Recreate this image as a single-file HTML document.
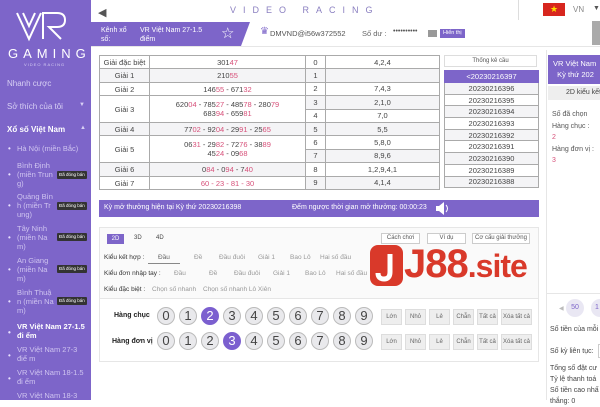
<!DOCTYPE html>
<html><head><meta charset="utf-8"><style>
*{margin:0;padding:0;box-sizing:border-box}
body{width:600px;height:400px;overflow:hidden;background:#fff;font-family:"Liberation Sans","DejaVu Sans",sans-serif;position:relative;color:#333}
.a{position:absolute;white-space:nowrap}
#sb{position:absolute;left:0;top:0;width:91px;height:400px;background:#7d65c9;color:#fff;overflow:hidden}
.si{position:absolute;left:17px;font-size:7.5px;color:#cfc4f0;line-height:9px;white-space:normal;width:40px}
.dot{position:absolute;left:-9px;color:#e8e0ff;font-size:8px}
.tag{position:absolute;left:40px;background:#333;color:#fff;font-size:4.5px;padding:1px 2px;border-radius:1px;white-space:nowrap;line-height:6px}
table{border-collapse:collapse;position:absolute;font-size:7.5px;color:#444;table-layout:fixed}
td{border:1px solid #aaa;text-align:center;padding:0;white-space:nowrap;overflow:hidden}
.g1{position:absolute;left:99px;top:55px;width:206px;display:grid;grid-template-columns:50px 156px;grid-template-rows:13px 14px 13px 27px 13px 27px 14px 13px;border-top:1px solid #aaa;border-left:1px solid #aaa;font-size:7.5px;color:#444}
.g1>div{border-right:1px solid #aaa;border-bottom:1px solid #aaa;display:flex;align-items:center;justify-content:center}
.g1>div>p{text-align:center;line-height:9px;white-space:nowrap}
.g1 .s{background:#f4f4f6}
.r{color:#d7517a}
.gr td{background:#f4f4f6}
.circ{position:absolute;width:18px;height:18px;border-radius:50%;background:#e9e9ec;border:1px solid #bbb;text-align:center;line-height:16px;font-size:13px;color:#444}
.circ.on{background:#7b5fcf;color:#fff;border-color:#7b5fcf}
.btn{position:absolute;height:16px;background:#eee;border:1px solid #ddd;font-size:6px;color:#666;text-align:center;line-height:14px;white-space:nowrap;overflow:hidden}
.tb{position:absolute;height:11px;border:1px solid #ccc;font-size:6px;color:#555;text-align:center;line-height:9px;background:#fff;white-space:nowrap;overflow:hidden}
.opt{font-size:6.5px;color:#999}
</style></head><body>
<div id="sb">
 <svg class="a" style="left:15px;top:10px" width="54" height="32" viewBox="0 0 54 32"><path d="M2 3 L14 29 L26 3 M8 3 L14 16 L20 3" fill="none" stroke="#fff" stroke-width="2"/><path d="M28 29 L28 3 L42 3 Q50 3 50 10 Q50 17 42 17 L34 17 L46 29" fill="none" stroke="#fff" stroke-width="2"/></svg>
 <div class="a" style="left:8px;top:46px;font-size:13px;letter-spacing:5px;color:#fff">GAMING</div>
 <div class="a" style="left:24px;top:62px;font-size:4px;letter-spacing:1px;color:#d8d0f4">VIDEO RACING</div>
 <div class="a" style="left:7px;top:79px;font-size:8px;color:#d8d0f4">Nhanh cược</div>
 <div class="a" style="left:7px;top:102px;font-size:8px;color:#d8d0f4">Sở thích của tôi</div>
 <div class="a" style="left:79px;top:102px;font-size:6px;color:#d8d0f4">▼</div>
 <div class="a" style="left:7px;top:125px;font-size:8px;color:#fff;font-weight:bold">Xổ số Việt Nam</div>
 <div class="a" style="left:80px;top:125px;font-size:6px;color:#d8d0f4">▲</div>
 <div class="si" style="top:144px;width:70px"><span class="dot">•</span>Hà Nội (miền Bắc)</div>
 <div class="si" style="top:161px"><span class="dot" style="top:9px">•</span>Bình Định (miền Trun g)<span class="tag" style="top:10px">Đã đóng bán</span></div>
 <div class="si" style="top:192px"><span class="dot" style="top:9px">•</span>Quảng Bìn h (miền Tr ung)<span class="tag" style="top:10px">Đã đóng bán</span></div>
 <div class="si" style="top:224px"><span class="dot" style="top:9px">•</span>Tây Ninh (miền Na m)<span class="tag" style="top:9px">Đã đóng bán</span></div>
 <div class="si" style="top:256px"><span class="dot" style="top:9px">•</span>An Giang (miền Na m)<span class="tag" style="top:9px">Đã đóng bán</span></div>
 <div class="si" style="top:288px"><span class="dot" style="top:9px">•</span>Bình Thuậ n (miền Na m)<span class="tag" style="top:9px">Đã đóng bán</span></div>
 <div class="si" style="top:322px;color:#fff;font-weight:bold;width:72px"><span class="dot" style="top:6px">•</span>VR Việt Nam 27-1.5 đi ểm</div>
 <div class="si" style="top:345px;width:72px"><span class="dot" style="top:6px">•</span>VR Việt Nam 27-3 điể m</div>
 <div class="si" style="top:368px;width:72px"><span class="dot" style="top:6px">•</span>VR Việt Nam 18-1.5 đi ểm</div>
 <div class="si" style="top:391px;width:72px"><span class="dot" style="top:6px">•</span>VR Việt Nam 18-3 điể</div>
</div>
<!-- top header -->
<div class="a" style="left:98px;top:6px;font-size:11px;color:#555">◀</div>
<div class="a" style="left:230px;top:5px;font-size:9px;letter-spacing:7px;color:#8a7fc0">VIDEO RACING</div>
<div class="a" style="left:518px;top:0;width:1px;height:20px;background:#ddd"></div>
<div class="a" style="left:543px;top:3px;width:22px;height:13px;background:#d7261e;color:#ffde00;font-size:9px;text-align:center;line-height:13px">★</div>
<div class="a" style="left:573px;top:5px;font-size:8px;color:#888">VN</div>
<div class="a" style="left:593px;top:5px;font-size:7px;color:#555">▼</div>
<svg class="a" style="left:91px;top:22px" width="160" height="24"><polygon points="0,0 159,0 150,24 0,24" fill="#7d65c9"/></svg>
<div class="a" style="left:101px;top:26px;font-size:7px;color:#fff;line-height:9px">Kênh xổ<br>số:</div>
<div class="a" style="left:140px;top:26px;font-size:7px;color:#fff;line-height:9px">VR Việt Nam 27-1.5<br>điểm</div>
<div class="a" style="left:221px;top:24px;font-size:15px;color:#fff">☆</div>
<div class="a" style="left:260px;top:26px;font-size:10px;color:#7d65c9">♛</div>
<div class="a" style="left:270px;top:29px;font-size:7.5px;color:#555">DMVND@i56w372552</div>
<div class="a" style="left:362px;top:29px;font-size:7.5px;color:#666">Số dư :</div>
<div class="a" style="left:393px;top:28px;font-size:7px;color:#555">••••••••••</div>
<div class="a" style="left:428px;top:30px;width:9px;height:7px;background:#999"></div>
<div class="a" style="left:440px;top:29px;height:9px;padding:0 3px;background:#7d65c9;color:#fff;font-size:5.5px;line-height:9px">Hiển thị</div>
<div class="a" style="left:592px;top:21px;width:8px;height:24px;background:#aaa"></div>
<div class="a" style="left:91px;top:46px;width:509px;height:1px;background:#e6e6e6"></div>
<!-- table 1 -->
<div class="g1">
<div><p>Giải đặc biệt</p></div><div><p>301<span class="r">47</span></p></div>
<div class="s"><p>Giải 1</p></div><div class="s"><p>210<span class="r">55</span></p></div>
<div><p>Giải 2</p></div><div><p>146<span class="r">55</span> - 671<span class="r">32</span></p></div>
<div><p>Giải 3</p></div><div><p>620<span class="r">04</span> - 785<span class="r">27</span> - 485<span class="r">78</span> - 280<span class="r">79</span><br>683<span class="r">94</span> - 659<span class="r">81</span></p></div>
<div class="s"><p>Giải 4</p></div><div class="s"><p>77<span class="r">02</span> - 92<span class="r">04</span> - 29<span class="r">91</span> - 25<span class="r">65</span></p></div>
<div><p>Giải 5</p></div><div><p>06<span class="r">31</span> - 29<span class="r">82</span> - 72<span class="r">76</span> - 38<span class="r">89</span><br>45<span class="r">24</span> - 09<span class="r">68</span></p></div>
<div class="s"><p>Giải 6</p></div><div class="s"><p>0<span class="r">84</span> - 0<span class="r">94</span> - 7<span class="r">40</span></p></div>
<div><p>Giải 7</p></div><div><p class="r">60 - 23 - 81 - 30</p></div>
</div>
<!-- table 2 -->
<table style="left:305px;top:55px;width:134px">
<tr style="height:13.4px"><td style="width:20px">0</td><td style="width:114px">4,2,4</td></tr>
<tr style="height:13.4px" class="gr"><td>1</td><td></td></tr>
<tr style="height:13.4px"><td>2</td><td>7,4,3</td></tr>
<tr style="height:13.4px" class="gr"><td>3</td><td>2,1,0</td></tr>
<tr style="height:13.4px"><td>4</td><td>7,0</td></tr>
<tr style="height:13.4px" class="gr"><td>5</td><td>5,5</td></tr>
<tr style="height:13.4px"><td>6</td><td>5,8,0</td></tr>
<tr style="height:13.4px" class="gr"><td>7</td><td>8,9,6</td></tr>
<tr style="height:13.4px"><td>8</td><td>1,2,9,4,1</td></tr>
<tr style="height:13.4px" class="gr"><td>9</td><td>4,1,4</td></tr>
</table>
<div class="a" style="left:444px;top:55px;width:93px;height:12px;border:1px solid #ddd;font-size:6px;text-align:center;line-height:10px;color:#555">Thống kê cầu</div>
<table style="left:444px;top:70px;width:95px">
<tr style="height:12px"><td style="background:#7d65c9;color:#fff;border-color:#7d65c9">&lt;20230216397</td></tr>
<tr style="height:11.7px" class="gr"><td>20230216396</td></tr>
<tr style="height:11.7px"><td>20230216395</td></tr>
<tr style="height:11.7px" class="gr"><td>20230216394</td></tr>
<tr style="height:11.7px"><td>20230216393</td></tr>
<tr style="height:11.7px" class="gr"><td>20230216392</td></tr>
<tr style="height:11.7px"><td>20230216391</td></tr>
<tr style="height:11.7px" class="gr"><td>20230216390</td></tr>
<tr style="height:11.7px"><td>20230216389</td></tr>
<tr style="height:11.7px" class="gr"><td>20230216388</td></tr>
</table>
<!-- right panel -->
<div class="a" style="left:546px;top:50px;width:1px;height:350px;background:#e6e6e6"></div>
<div class="a" style="left:548px;top:55px;width:52px;height:29px;background:#7d65c9;color:#fff;font-size:7.5px;line-height:11px;padding:3px 0 0 5px">VR Việt Nam<br>&nbsp;&nbsp;Kỳ thứ 202</div>
<div class="a" style="left:548px;top:86px;width:52px;height:14px;background:#eee;color:#444;font-size:7px;line-height:14px;padding-left:18px">2D kiểu kết</div>
<div class="a" style="left:552px;top:109px;font-size:7px;color:#555;line-height:11.5px">Số đã chọn<br>Hàng chục :<br><span class="r">2</span><br>Hàng đơn vị :<br><span class="r">3</span></div>
<div class="a" style="left:546px;top:293px;width:54px;height:1px;background:#e6e6e6"></div>
<div class="a" style="left:559px;top:305px;font-size:6px;color:#bbb">◀</div>
<div class="a" style="left:566px;top:299px;width:18px;height:18px;border-radius:50%;background:#e9e7f3;color:#7d65c9;font-size:7px;text-align:center;line-height:18px">50</div>
<div class="a" style="left:591px;top:299px;width:18px;height:18px;border-radius:50%;background:#e9e7f3;color:#7d65c9;font-size:7px;line-height:18px;padding-left:4px">1</div>
<div class="a" style="left:550px;top:326px;font-size:7px;color:#444">Số tiền của mỗi</div>
<div class="a" style="left:550px;top:348px;font-size:7px;color:#444">Số kỳ liên tục:</div>
<div class="a" style="left:598px;top:344px;width:4px;height:14px;border:1px solid #ccc"></div>
<div class="a" style="left:550px;top:363px;font-size:7px;color:#444;line-height:11px">Tổng số đặt cư<br>Tỷ lệ thanh toá<br>Số tiền cao nhấ<br>thắng: 0</div>
<!-- purple bar -->
<div class="a" style="left:99px;top:200px;width:440px;height:17px;background:#7d65c9"></div>
<div class="a" style="left:104px;top:204px;font-size:7px;color:#fff">Kỳ mở thưởng hiện tại Kỳ thứ 20230216398</div>
<div class="a" style="left:292px;top:204px;font-size:7px;color:#fff">Đếm ngược thời gian mở thưởng: 00:00:23</div>
<svg class="a" style="left:435px;top:201px" width="16" height="15"><polygon points="1,5 4,5 9,1 9,14 4,10 1,10" fill="#fff"/><path d="M11 4 Q14 7.5 11 11" stroke="#fff" fill="none"/></svg>
<!-- bet panel -->
<div class="a" style="left:99px;top:227px;width:440px;height:135px;border:1px solid #e6e6e6;background:#fff"></div>
<div class="a" style="left:100px;top:228px;width:438px;height:70px;background:#fafafa"></div>
<div class="a" style="left:107px;top:234px;width:17px;height:10px;background:#7d65c9;color:#fff;font-size:6px;text-align:center;line-height:10px">2D</div>
<div class="a" style="left:134px;top:235px;font-size:6px;color:#444">3D</div>
<div class="a" style="left:156px;top:235px;font-size:6px;color:#444">4D</div>
<div class="tb" style="left:381px;top:233px;width:39px">Cách chơi</div>
<div class="tb" style="left:427px;top:233px;width:39px">Ví dụ</div>
<div class="tb" style="left:472px;top:233px;width:58px">Cơ cấu giải thưởng</div>
<div class="a" style="left:104px;top:254px;font-size:6.5px;color:#333">Kiểu kết hợp :</div>
<div class="a opt" style="left:158px;top:254px;color:#666">Đầu</div>
<div class="a" style="left:148px;top:263px;width:32px;height:1px;background:#888"></div>
<div class="a opt" style="left:194px;top:254px">Đề</div><div class="a opt" style="left:219px;top:254px">Đầu đuôi</div><div class="a opt" style="left:258px;top:254px">Giải 1</div><div class="a opt" style="left:290px;top:254px">Bao Lô</div><div class="a opt" style="left:320px;top:254px">Hai số đầu</div>
<div class="a" style="left:104px;top:270px;font-size:6.5px;color:#333">Kiểu đơn nhập tay :</div>
<div class="a opt" style="left:174px;top:270px">Đầu</div><div class="a opt" style="left:209px;top:270px">Đề</div><div class="a opt" style="left:234px;top:270px">Đầu đuôi</div><div class="a opt" style="left:273px;top:270px">Giải 1</div><div class="a opt" style="left:305px;top:270px">Bao Lô</div><div class="a opt" style="left:336px;top:270px">Hai số đầu</div>
<div class="a" style="left:104px;top:286px;font-size:6.5px;color:#333">Kiểu đặc biệt :</div>
<div class="a opt" style="left:152px;top:286px">Chọn số nhanh</div><div class="a opt" style="left:203px;top:286px">Chọn số nhanh Lô Xiên</div>
<div class="a" style="left:100px;top:298px;width:438px;height:1px;background:#e6e6e6"></div>
<div class="a" style="left:114px;top:312px;font-size:7px;color:#222;font-weight:bold">Hàng chục</div>
<div class="a" style="left:112px;top:338px;font-size:7px;color:#222;font-weight:bold">Hàng đơn vị</div>
<div class="circ" style="left:157px;top:307px">0</div><div class="circ" style="left:179px;top:307px">1</div><div class="circ on" style="left:201px;top:307px">2</div><div class="circ" style="left:223px;top:307px">3</div><div class="circ" style="left:245px;top:307px">4</div><div class="circ" style="left:267px;top:307px">5</div><div class="circ" style="left:289px;top:307px">6</div><div class="circ" style="left:311px;top:307px">7</div><div class="circ" style="left:333px;top:307px">8</div><div class="circ" style="left:355px;top:307px">9</div>
<div class="circ" style="left:157px;top:332px">0</div><div class="circ" style="left:179px;top:332px">1</div><div class="circ" style="left:201px;top:332px">2</div><div class="circ on" style="left:223px;top:332px">3</div><div class="circ" style="left:245px;top:332px">4</div><div class="circ" style="left:267px;top:332px">5</div><div class="circ" style="left:289px;top:332px">6</div><div class="circ" style="left:311px;top:332px">7</div><div class="circ" style="left:333px;top:332px">8</div><div class="circ" style="left:355px;top:332px">9</div>
<div class="btn" style="left:381px;top:309px;width:21px">Lớn</div><div class="btn" style="left:405px;top:309px;width:21px">Nhỏ</div><div class="btn" style="left:429px;top:309px;width:21px">Lẻ</div><div class="btn" style="left:453px;top:309px;width:21px">Chẵn</div><div class="btn" style="left:477px;top:309px;width:21px">Tất cả</div><div class="btn" style="left:501px;top:309px;width:31px">Xóa tất cả</div>
<div class="btn" style="left:381px;top:334px;width:21px">Lớn</div><div class="btn" style="left:405px;top:334px;width:21px">Nhỏ</div><div class="btn" style="left:429px;top:334px;width:21px">Lẻ</div><div class="btn" style="left:453px;top:334px;width:21px">Chẵn</div><div class="btn" style="left:477px;top:334px;width:21px">Tất cả</div><div class="btn" style="left:501px;top:334px;width:31px">Xóa tất cả</div>
<!-- J88 logo -->
<div class="a" style="left:370px;top:245px;width:33px;height:41px;background:#d9392a;border-radius:8px"></div>
<svg class="a" style="left:370px;top:245px" width="33" height="41"><path d="M20 9 L20 27 Q20 34 14 34 Q8 34 8 28" stroke="#fff" stroke-width="5" fill="none"/></svg>
<div class="a" style="left:404px;top:240px;font-size:40px;font-weight:bold;color:#d9392a;letter-spacing:-1px;line-height:48px">J88<span style="font-size:32px">.site</span></div>
</body></html>
